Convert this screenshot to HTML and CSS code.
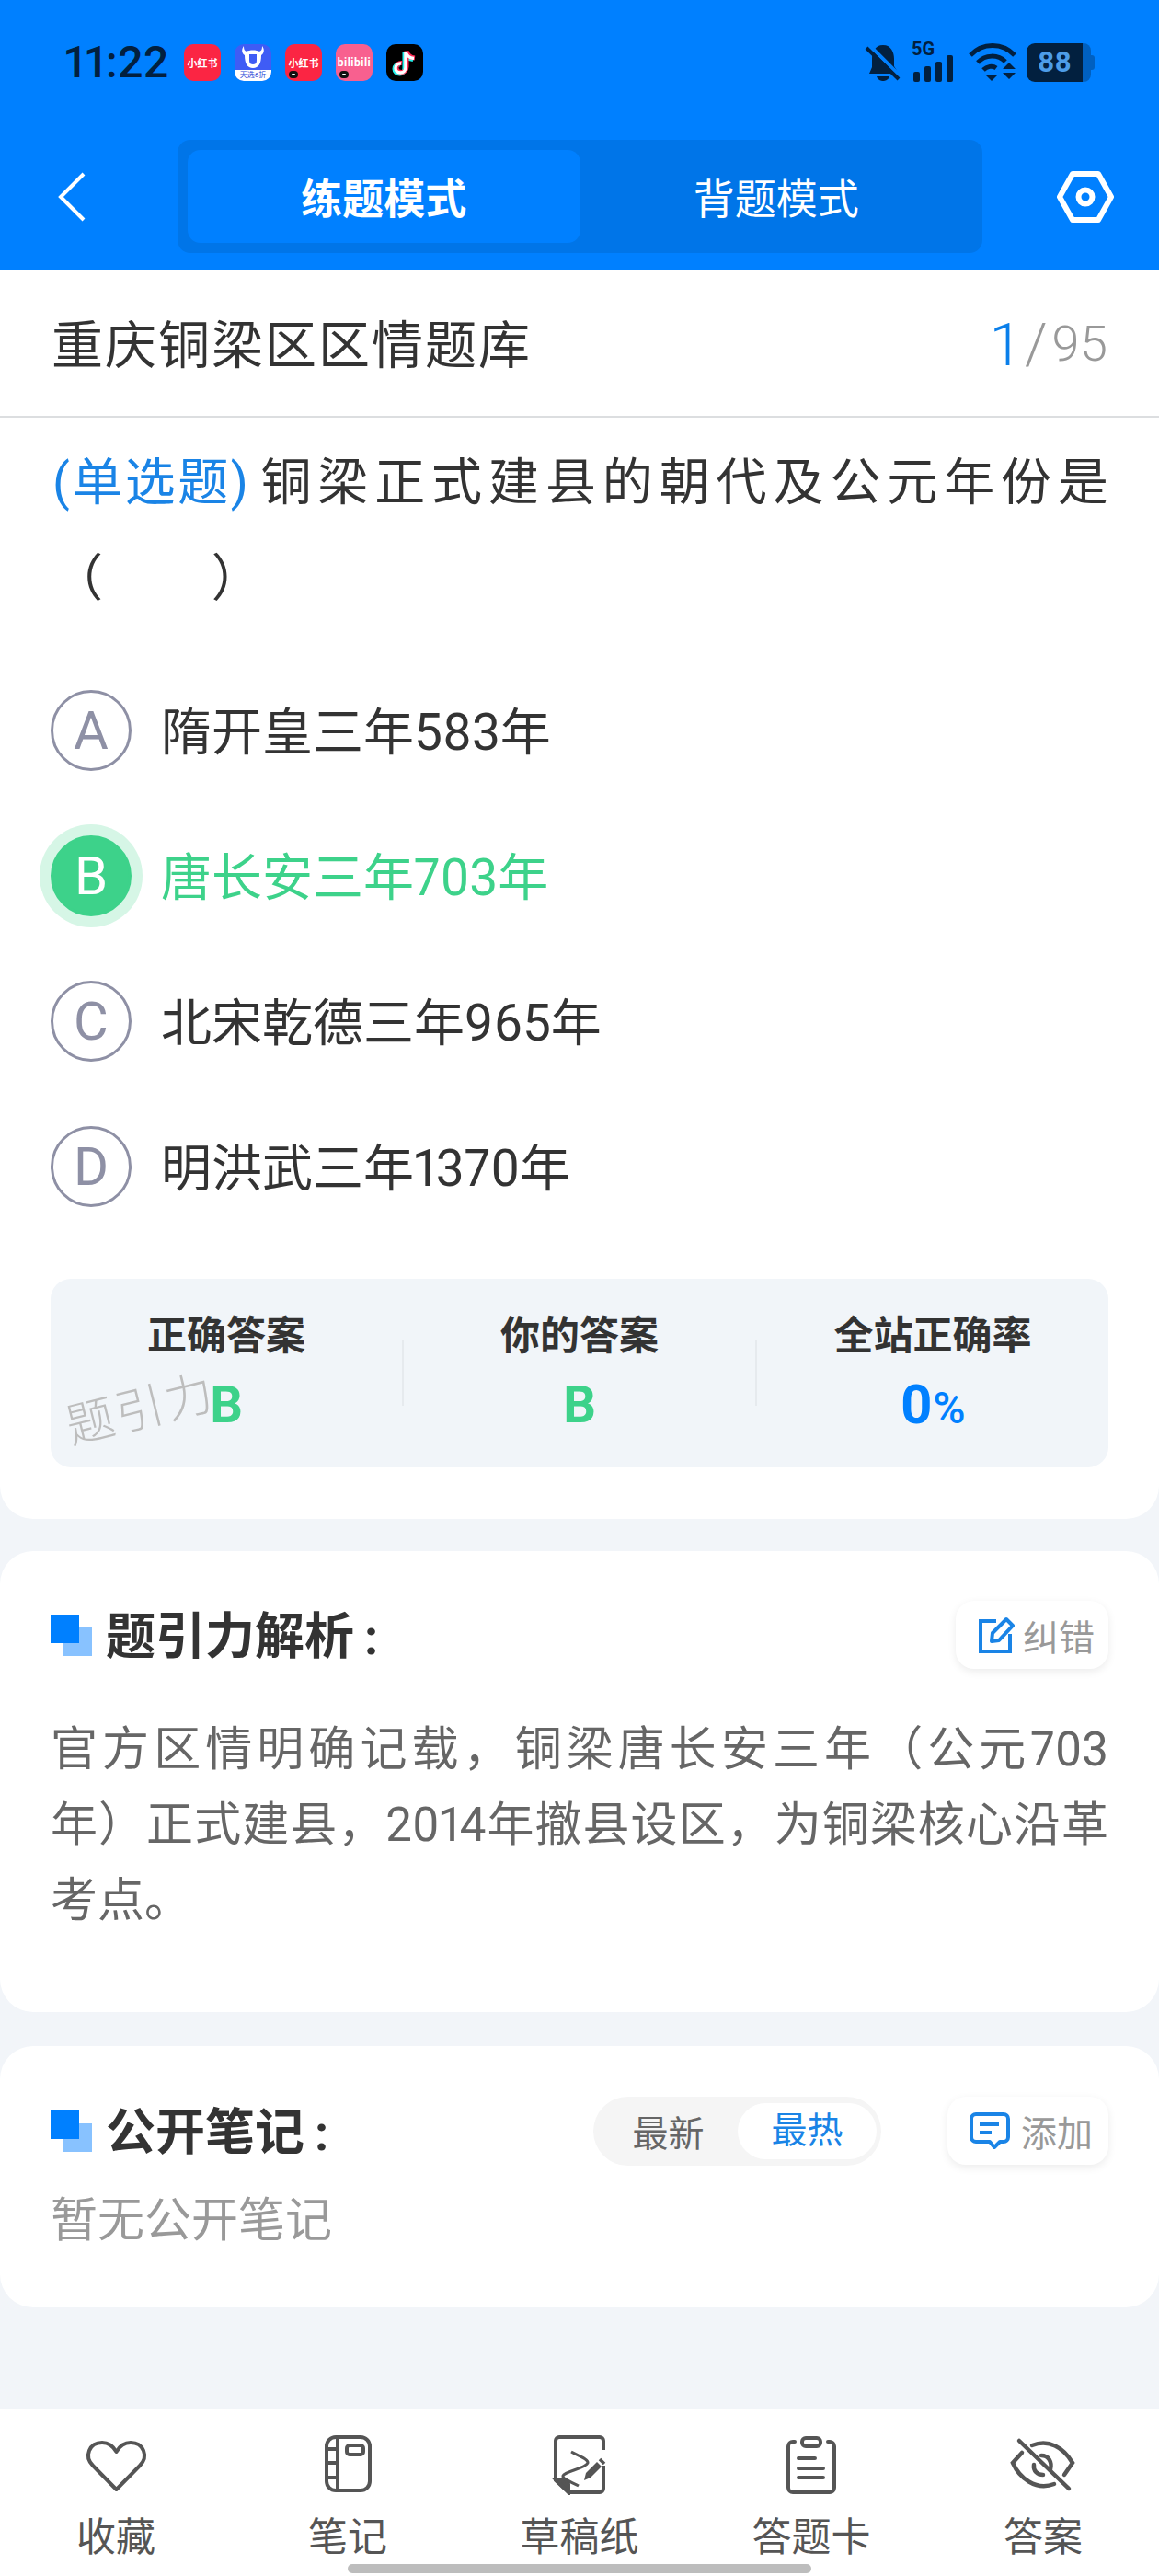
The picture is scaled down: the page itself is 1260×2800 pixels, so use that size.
FILE: index.html
```html
<!DOCTYPE html>
<html lang="zh-CN">
<head>
    <meta charset="UTF-8">
    <title>题引力 练题</title>
    <link rel="stylesheet" href="styles.css">
</head>
<body>
    <div class="top">
        <div class="status">
            <span class="time">11:22</span>
            <div class="apps">
                <div class="app app-red">小红书</div>
                <div class="app app-cow">
                    <svg viewBox="0 0 40 28" width="40" height="28">
                        <path d="M10 2 C10 6 11 7 13 8 C16 6 24 6 27 8 C29 7 30 6 30 2 C33 6 32 10 29 12 C29 21 26 26 20 26 C14 26 11 21 11 12 C8 10 7 6 10 2 Z" fill="#fff"/>
                        <path d="M16 11 H24 V18 C24 21 22 22 20 22 C18 22 16 21 16 18 Z" fill="#3f5cf5"/>
                    </svg>
                    <span class="app-band">天选6折</span>
                </div>
                <div class="app app-red">小红书<i class="app-dot"></i></div>
                <div class="app app-pink">bilibili<i class="app-dot"></i></div>
                <div class="app app-tiktok">
                    <svg viewBox="0 0 40 40" width="40" height="40" fill="none" stroke-width="5">
                        <path d="M21 8 V25 C21 29 18 31 15.500 31 C12.500 31 10 29 10 26 C10 23 12.500 20.500 16 21 M21 8 C22 13 25 15 30 15.500" stroke="#25f4ee" transform="translate(-1 1)"/>
                        <path d="M21 8 V25 C21 29 18 31 15.500 31 C12.500 31 10 29 10 26 C10 23 12.500 20.500 16 21 M21 8 C22 13 25 15 30 15.500" stroke="#fe2c55" transform="translate(1 -.5)"/>
                        <path d="M21 8 V25 C21 29 18 31 15.500 31 C12.500 31 10 29 10 26 C10 23 12.500 20.500 16 21 M21 8 C22 13 25 15 30 15.500" stroke="#fff" stroke-width="3.500"/>
                    </svg>
                </div>
            </div>
            <div class="sys">
                <svg class="sys-bell" viewBox="0 0 40 40" width="40" height="40">
                    <path d="M20 1 C29 1 32 9 32 16 V24 L37 32 H5 L8 25 V16 C8 9 11 1 20 1 Z" fill="#02203f"/>
                    <path d="M13 35 H27 C26 39 22 40 20 40 C18 40 14 39 13 35 Z" fill="#02203f"/>
                    <path d="M5 1 L39 35" stroke="#0080ff" stroke-width="4"/>
                    <path d="M2 4 L37 38" stroke="#02203f" stroke-width="4"/>
                </svg>
                <div class="sys-signal">
                    <span class="sys-5g">5G</span>
                    <div class="bars"><i class="bar bar-1"></i><i class="bar bar-2"></i><i class="bar bar-3"></i><i class="bar bar-4"></i></div>
                </div>
                <svg class="sys-wifi" viewBox="0 0 54 42" width="54" height="42" fill="none" stroke="#02203f" stroke-width="5">
                    <path d="M3 13 C16 -1 38 -1 51 13"/>
                    <path d="M11 21 C19 12 33 12 41 20"/>
                    <path d="M17 29 C21 25 27 24 31 27"/>
                    <path d="M19 34 H33 L26 41 Z" fill="#02203f" stroke="none"/>
                    <path d="M39 27 L46 20 L53 27 Z M39 31 H53 L46 38 Z" fill="#02203f" stroke="none" transform="translate(-1 1)"/>
                </svg>
                <div class="battery"><span class="battery-level">88</span><i class="battery-rest"></i><i class="battery-cap"></i></div>
            </div>
        </div>
        <div class="nav">
            <svg class="back" viewBox="0 0 30 54" width="30" height="54" fill="none" stroke="#fff" stroke-width="4">
                <path d="M28 2 L3 27 L28 52"/>
            </svg>
            <div class="mode">
                <div class="mode-item mode-on">练题模式</div>
                <div class="mode-item">背题模式</div>
            </div>
            <svg class="gear" viewBox="0 0 62 56" width="62" height="56" fill="none" stroke="#fff" stroke-width="6">
                <path d="M17 3 H45 L59 28 L45 53 H17 L3 28 Z" stroke-linejoin="round"/>
                <circle cx="31" cy="28" r="7.500"/>
            </svg>
        </div>
    </div>

    <div class="title-bar">
        <span class="title-name">重庆铜梁区区情题库</span>
        <span class="count"><b class="count-now">1</b><i class="count-sep">/</i>95</span>
    </div>

    <section class="card card-question">
        <p class="question"><span class="question-type">(单选题)</span>铜梁正式建县的朝代及公元年份是（&emsp;&emsp;&#8202;）</p>
        <ul class="options">
            <li class="option"><span class="option-mark">A</span><span class="option-text">隋开皇三年583年</span></li>
            <li class="option option-right"><span class="option-mark">B</span><span class="option-text">唐长安三年703年</span></li>
            <li class="option"><span class="option-mark">C</span><span class="option-text">北宋乾德三年965年</span></li>
            <li class="option"><span class="option-mark">D</span><span class="option-text">明洪武三年1370年</span></li>
        </ul>
        <div class="stats">
            <div class="stat">
                <div class="stat-label">正确答案</div>
                <div class="stat-value green">B</div>
            </div>
            <i class="stat-sep"></i>
            <div class="stat">
                <div class="stat-label">你的答案</div>
                <div class="stat-value green">B</div>
            </div>
            <i class="stat-sep"></i>
            <div class="stat">
                <div class="stat-label">全站正确率</div>
                <div class="stat-value blue rate">0<small>%</small></div>
            </div>
            <span class="watermark">题引力</span>
        </div>
    </section>

    <section class="card card-analysis">
        <div class="card-head">
            <svg class="head-mark" viewBox="0 0 45 45" width="45" height="45">
                <rect x="14" y="14" width="31" height="31" fill="#88c2ff"/>
                <rect width="31" height="31" fill="#0080ff"/>
            </svg>
            <h2 class="head-title">题引力解析&#8201;:</h2>
            <div class="tool">
                <svg viewBox="0 0 40 40" width="40" height="40" fill="none" stroke="#1a84e6" stroke-width="4">
                    <path d="M20 5 H3 V38 H35 V19"/>
                    <path d="M15 27 L16 18 L31 3 L38 10 L23 26 Z" stroke-linejoin="round"/>
                </svg>
                <span>纠错</span>
            </div>
        </div>
        <p class="analysis">
            <span class="analysis-line">官方区情明确记载，铜梁唐长安三年（公元703</span>
            <span class="analysis-line">年）正式建县，2014年撤县设区，为铜梁核心沿革</span>
            <span class="analysis-end">考点。</span>
        </p>
    </section>

    <section class="card card-notes">
        <div class="card-head">
            <svg class="head-mark" viewBox="0 0 45 45" width="45" height="45">
                <rect x="14" y="14" width="31" height="31" fill="#88c2ff"/>
                <rect width="31" height="31" fill="#0080ff"/>
            </svg>
            <h2 class="head-title">公开笔记&#8201;:</h2>
            <div class="sort">
                <span class="sort-item">最新</span>
                <span class="sort-item sort-on">最热</span>
            </div>
            <div class="tool tool-add">
                <svg viewBox="0 0 44 40" width="44" height="40" fill="none" stroke="#1a84e6" stroke-width="4">
                    <path d="M7 2 H37 A5 5 0 0 1 42 7 V27 A5 5 0 0 1 37 32 H33 L27 38 L22 32 H7 A5 5 0 0 1 2 27 V7 A5 5 0 0 1 7 2 Z" stroke-linejoin="round"/>
                    <path d="M11 13 H32 M11 22 H24"/>
                </svg>
                <span>添加</span>
            </div>
        </div>
        <p class="notes-empty">暂无公开笔记</p>
    </section>

    <nav class="tabs">
        <div class="tab">
            <svg viewBox="0 0 80 66" width="80" height="66" fill="none" stroke="#555" stroke-width="4">
                <path d="M40.500 60 L15 34 C5 24 11 9 25 9 C32 9 37 13 40.500 19 C44 13 49 9 56 9 C70 9 76 24 66 34 Z" stroke-linejoin="round"/>
            </svg>
            <span>收藏</span>
        </div>
        <div class="tab">
            <svg viewBox="0 0 80 66" width="80" height="66" fill="none" stroke="#555" stroke-width="4">
                <rect x="17" y="3" width="47" height="58" rx="10"/>
                <path d="M29 3 V61 M17 16 H29 M17 31 H29 M17 47 H29"/>
                <rect x="39" y="12" width="18" height="10" rx="3"/>
            </svg>
            <span>笔记</span>
        </div>
        <div class="tab">
            <svg viewBox="0 0 80 66" width="80" height="66" fill="none" stroke="#555" stroke-width="4">
                <path d="M66 17 V7 A4 4 0 0 0 62 3 H18 A4 4 0 0 0 14 7 V50 L28 63 H62 A4 4 0 0 0 66 59 V34"/>
                <path d="M15 50 H24 A4 4 0 0 1 28 54 V63 Z" fill="#555"/>
                <path d="M31 19 C38 23 50 27 49 31 C47 37 24 40 22 45 C21 49 32 52 39 56" stroke-width="3"/>
                <path d="M45 50 L47 42 L59 30 L64 35 L52 47 Z" fill="#555" stroke="none"/>
                <path d="M62 27 L67 32" stroke-width="3.500"/>
            </svg>
            <span>草稿纸</span>
        </div>
        <div class="tab">
            <svg viewBox="0 0 80 66" width="80" height="66" fill="none" stroke="#555" stroke-width="4" stroke-linecap="round">
                <path d="M22 8 H20 A5 5 0 0 0 15 13 V58 A5 5 0 0 0 20 63 H60 A5 5 0 0 0 65 58 V13 A5 5 0 0 0 60 8 H58"/>
                <rect x="30" y="4" width="20" height="9" rx="4"/>
                <path d="M26 26 H44 M26 37 H53 M26 47 H53"/>
            </svg>
            <span>答题卡</span>
        </div>
        <div class="tab">
            <svg viewBox="0 0 80 66" width="80" height="66" fill="none" stroke="#555" stroke-width="4.500" stroke-linecap="round">
                <path d="M14 7 L68 59"/>
                <path d="M28 12 C46 5 62 14 72 31 L63 44"/>
                <path d="M17 20 L7 31 C14 47 32 62 52 54"/>
                <path d="M38 23 C46 23 50 30 48 38"/>
                <path d="M30 33 C29 40 34 44 40 44"/>
            </svg>
            <span>答案</span>
        </div>
        <i class="home-bar"></i>
    </nav>
</body>
</html>
```

FILE: styles.css
```css
* {
    margin: 0;
    padding: 0;
    box-sizing: border-box;
}

body {
    font-family: Roboto, "Noto Sans CJK SC", sans-serif;
    font-variant-numeric: proportional-nums;
    background: #f2f5f9;
    color: #333;
    width: 1260px;
    height: 2800px;
    display: flex;
    flex-direction: column;
    overflow: hidden;
}

svg {
    display: block;
    flex: none;
}

/* blue header */
.top {
    background: #0080ff;
    height: 294px;
    padding-top: 48px;
}

.status {
    display: flex;
    align-items: center;
    height: 40px;
    padding: 0 70px;
}

.time {
    font-size: 48px;
    font-weight: 500;
    line-height: 40px;
    color: #02203f;
    width: 130px;
    letter-spacing: 0.500px;
}

.apps {
    display: flex;
    gap: 15px;
}

.app {
    position: relative;
    width: 40px;
    height: 40px;
    border-radius: 10px;
    display: flex;
    align-items: center;
    justify-content: center;
    color: #fff;
    font-size: 11px;
    font-weight: 700;
    white-space: nowrap;
}

.app-red {
    background: #fb2543;
}

.app-pink {
    background: #f8608f;
    font-size: 12px;
    letter-spacing: 0.5px;
}

.app-tiktok {
    background: #000;
}

.app-cow {
    background: #3f5cf5;
    display: block;
    overflow: hidden;
}

.app-band {
    display: block;
    height: 12px;
    background: #fff;
    color: #2a48d8;
    font-size: 8px;
    font-weight: 400;
    line-height: 12px;
    text-align: center;
}

.app-dot {
    position: absolute;
    left: 4px;
    bottom: 3px;
    width: 10px;
    height: 8px;
    border-radius: 5px;
    background: #fff;
    border: 3px solid #111;
}

.sys {
    display: flex;
    align-items: center;
    margin-left: auto;
    margin-right: 0;
}

.sys-bell {
    margin-left: 0;
}

.sys-signal {
    position: relative;
    width: 50px;
    height: 42px;
    margin-left: 11px;
}

.sys-5g {
    position: absolute;
    left: 0;
    top: -4px;
    font-size: 20px;
    font-weight: 700;
    color: #02203f;
    line-height: 20px;
}

.bars {
    position: absolute;
    left: 2px;
    bottom: 0;
    display: flex;
    align-items: flex-end;
    gap: 5px;
}

.bar {
    width: 7px;
    background: #02203f;
    border-radius: 2px;
}

.bar-1 {
    height: 11px;
}

.bar-2 {
    height: 17px;
}

.bar-3 {
    height: 22px;
}

.bar-4 {
    height: 29px;
}

.sys-wifi {
    margin-left: 11px;
}

.battery {
    position: relative;
    display: flex;
    margin-left: 10px;
    height: 42px;
}

.battery-level {
    width: 61px;
    height: 42px;
    background: #02203f;
    border-radius: 9px 0 0 9px;
    color: #4d9de8;
    font-size: 31px;
    font-weight: 700;
    line-height: 42px;
    text-align: center;
}

.battery-rest {
    width: 9px;
    background: #0060c0;
    border-radius: 0 8px 8px 0;
}

.battery-cap {
    align-self: center;
    width: 4px;
    height: 16px;
    background: #0060c0;
    border-radius: 0 3px 3px 0;
}

.nav {
    display: flex;
    align-items: center;
    margin-top: 64px;
    height: 123px;
    padding-left: 63px;
}

.back {
    margin-right: 100px;
}

.mode {
    display: flex;
    width: 875px;
    height: 123px;
    padding: 11px;
    background: #0075e8;
    border-radius: 14px;
}

.mode-item {
    flex: 1;
    display: flex;
    align-items: center;
    justify-content: center;
    color: #fff;
    font-size: 45px;
    border-radius: 14px;
}

.mode-on {
    background: #0080ff;
    font-weight: 700;
}

.gear {
    margin-left: 81px;
}

/* title row */
.title-bar {
    display: flex;
    align-items: center;
    justify-content: space-between;
    height: 160px;
    padding: 0 56px 6px 56px;
    background: #fff;
    border-bottom: 2px solid #dcdee0;
}

.title-name {
    font-size: 56px;
    letter-spacing: 2px;
}

.count {
    display: flex;
    align-items: center;
    margin-top: 6px;
    font-size: 54px;
    font-weight: 300;
    color: #999;
}

.count-now {
    font-size: 64px;
    font-weight: 300;
    color: #0a7fea;
    margin-top: 4px;
}

.count-sep {
    font-style: normal;
    font-size: 62px;
    margin: 0 5px 0 8px;
}

/* cards */
.card {
    background: #fff;
}

.card-question {
    border-radius: 0 0 36px 36px;
    padding: 18px 55px 56px;
}

.card-analysis {
    border-radius: 36px;
    margin-top: 35px;
    padding: 54px 55px 80px;
}

.card-notes {
    border-radius: 36px;
    margin-top: 37px;
    padding: 55px 55px 59px;
}

.question {
    font-size: 55px;
    line-height: 104px;
    text-align: justify;
    padding: 0 0 0 2px;
}

.question-type {
    display: inline-block;
    margin-right: 4px;
    color: #1a84e6;
    letter-spacing: 2.500px;
}

.options {
    list-style: none;
    margin-top: 35px;
}

.option {
    display: flex;
    align-items: center;
    gap: 32px;
    height: 158px;
    font-size: 55px;
    color: #333;
}

.option-text {
    margin-bottom: 6px;
}

.option-mark {
    width: 88px;
    height: 88px;
    border: 3px solid #8e90a5;
    border-radius: 50%;
    display: flex;
    align-items: center;
    justify-content: center;
    color: #8e90a5;
    font-size: 58px;
    font-weight: 400;
}

.option-right {
    color: #3dd28a;
}

.option-right .option-mark {
    background: #3dd28a;
    border-color: #3dd28a;
    color: #fff;
    box-shadow: 0 0 0 12px #d6f6e6;
}

.stats {
    position: relative;
    display: flex;
    height: 205px;
    margin-top: 43px;
    padding-top: 32px;
    background: #f1f5f9;
    border-radius: 22px;
}

.stat {
    flex: 1;
    text-align: center;
}

.stat-label {
    font-size: 43px;
    font-weight: 700;
    line-height: 60px;
}

.stat-value {
    margin-top: 15px;
    font-size: 56px;
    font-weight: 700;
    line-height: 60px;
}

.rate {
    font-size: 60px;
}

.rate small {
    font-size: 48px;
    font-weight: 500;
}

.green {
    color: #3dd28a;
}

.blue {
    color: #0080ff;
}

.stat-sep {
    width: 2px;
    height: 72px;
    margin-top: 34px;
    background: #e6eaee;
}

.watermark {
    position: absolute;
    left: 16px;
    top: 113px;
    font-size: 52px;
    line-height: 60px;
    font-weight: 300;
    letter-spacing: 3px;
    color: #bdbdbd;
    transform: rotate(-14deg);
}

.card-head {
    display: flex;
    align-items: center;
    height: 74px;
}

.head-mark {
    margin-right: 15px;
}

.head-title {
    flex: 1;
    margin-bottom: 6px;
    font-size: 54px;
    font-weight: 700;
    color: #333;
}

.tool {
    display: flex;
    align-items: center;
    gap: 9px;
    width: 166px;
    height: 74px;
    padding-left: 24px;
    background: #fff;
    border-radius: 20px;
    box-shadow: 0 3px 10px rgba(0, 0, 0, 0.08);
    color: #999;
    font-size: 39px;
}

.tool-add {
    width: 175px;
    margin-left: 72px;
    gap: 12px;
}

.analysis {
    margin-top: 47px;
    font-size: 51px;
    line-height: 82px;
    color: #666;
}

.analysis-line {
    display: block;
    text-align: justify;
    text-align-last: justify;
}

.analysis-end {
    display: block;
}

.sort {
    display: flex;
    align-items: center;
    width: 313px;
    height: 75px;
    padding: 0 5px 0 6px;
    background: #f5f5f5;
    border-radius: 38px;
    font-size: 39px;
    color: #666;
}

.sort-item {
    flex: 1;
    text-align: center;
}

.sort-on {
    flex: none;
    width: 151px;
    height: 61px;
    line-height: 61px;
    background: #fff;
    border-radius: 31px;
    color: #1a84e6;
}

.notes-empty {
    margin-top: 26px;
    font-size: 51px;
    line-height: 70px;
    color: #999;
}

/* bottom tabs */
.tabs {
    position: relative;
    display: flex;
    margin-top: auto;
    height: 182px;
    padding-top: 28px;
    background: #fff;
}

.tab {
    flex: 1;
    display: flex;
    flex-direction: column;
    align-items: center;
    color: #555;
    font-size: 43px;
    line-height: 50px;
}

.tab span {
    margin-top: 21px;
}

.home-bar {
    position: absolute;
    left: 378px;
    bottom: 3px;
    width: 504px;
    height: 10px;
    border-radius: 5px;
    background: #bdbdbd;
}
```
